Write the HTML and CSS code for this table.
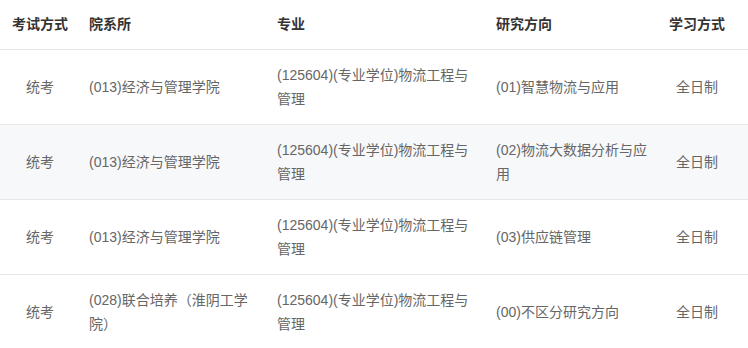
FILE: index.html
```html
<!DOCTYPE html>
<html lang="zh-CN">
<head>
<meta charset="utf-8">
<link rel="stylesheet" href="styles.css">
</head>
<body>
<table class="plan">
  <colgroup>
    <col class="c1"><col class="c2"><col class="c3"><col class="c4"><col class="c5">
  </colgroup>
  <thead>
    <tr>
      <th class="center">考试方式</th>
      <th>院系所</th>
      <th>专业</th>
      <th>研究方向</th>
      <th class="center last">学习方式</th>
    </tr>
  </thead>
  <tbody>
    <tr>
      <td class="center">统考</td>
      <td>(013)经济与管理学院</td>
      <td>(125604)(专业学位)物流工程与管理</td>
      <td>(01)智慧物流与应用</td>
      <td class="center last">全日制</td>
    </tr>
    <tr class="alt">
      <td class="center">统考</td>
      <td>(013)经济与管理学院</td>
      <td>(125604)(专业学位)物流工程与管理</td>
      <td>(02)物流大数据分析与应用</td>
      <td class="center last">全日制</td>
    </tr>
    <tr>
      <td class="center">统考</td>
      <td>(013)经济与管理学院</td>
      <td>(125604)(专业学位)物流工程与管理</td>
      <td>(03)供应链管理</td>
      <td class="center last">全日制</td>
    </tr>
    <tr>
      <td class="center">统考</td>
      <td>(028)联合培养（淮阴工学院）</td>
      <td>(125604)(专业学位)物流工程与管理</td>
      <td>(00)不区分研究方向</td>
      <td class="center last">全日制</td>
    </tr>
  </tbody>
</table>
</body>
</html>
```

FILE: styles.css
```css
html, body {
  margin: 0;
  padding: 0;
  background: #ffffff;
}
body {
  font-family: "Liberation Sans", "Noto Sans CJK SC", sans-serif;
  font-size: 14px;
  color: #666666;
}
.plan {
  width: 748px;
  border-collapse: collapse;
  table-layout: fixed;
}
.c1 { width: 80px; }
.c2 { width: 188px; }
.c3 { width: 219px; }
.c4 { width: 173px; }
.c5 { width: 88px; }
.plan th {
  font-weight: bold;
  color: #333333;
  text-align: left;
  line-height: 24px;
  padding: 12px 9px 13px;
  border-bottom: 1px solid #e8e8e8;
  vertical-align: middle;
}
.plan td {
  line-height: 24px;
  padding: 13px 9px;
  height: 48px;
  border-bottom: 1px solid #e8e8e8;
  vertical-align: middle;
  word-break: break-all;
}
.plan .center {
  text-align: center;
}
.plan .last {
  padding-left: 0;
  padding-right: 14px;
}
.plan tr.alt td {
  background: #f7f8fa;
}
```
